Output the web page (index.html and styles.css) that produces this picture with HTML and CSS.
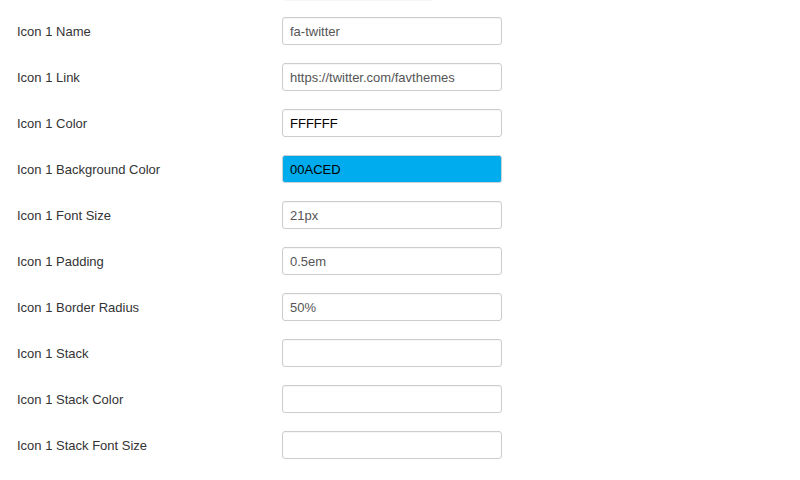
FILE: index.html
```html
<!DOCTYPE html>
<html>
<head>
<meta charset="utf-8">
<link rel="stylesheet" href="styles.css">
</head>
<body>
<div class="topedge"></div>
<form class="form">
  <div class="row"><label>Icon 1 Name</label><input class="field" type="text" value="fa-twitter"></div>
  <div class="row"><label>Icon 1 Link</label><input class="field" type="text" value="https://twitter.com/favthemes"></div>
  <div class="row"><label>Icon 1 Color</label><input class="field color" type="text" value="FFFFFF"></div>
  <div class="row"><label>Icon 1 Background Color</label><input class="field color blue" type="text" value="00ACED"></div>
  <div class="row"><label>Icon 1 Font Size</label><input class="field" type="text" value="21px"></div>
  <div class="row"><label>Icon 1 Padding</label><input class="field" type="text" value="0.5em"></div>
  <div class="row"><label>Icon 1 Border Radius</label><input class="field" type="text" value="50%"></div>
  <div class="row"><label>Icon 1 Stack</label><input class="field" type="text" value=""></div>
  <div class="row"><label>Icon 1 Stack Color</label><input class="field" type="text" value=""></div>
  <div class="row"><label>Icon 1 Stack Font Size</label><input class="field" type="text" value=""></div>
</form>
</body>
</html>
```
FILE: styles.css
```css
html, body {
  margin: 0;
  padding: 0;
  background: #fff;
  font-family: "Liberation Sans", Arial, sans-serif;
  font-size: 13px;
  color: #333;
}
.topedge {
  height: 1px;
  width: 148px;
  margin-left: 284px;
  background: #f6f6f6;
}
.form {
  padding: 16px 0 0 17px;
  display: flex;
  flex-direction: column;
  gap: 18px;
}
.row {
  display: flex;
  align-items: center;
  height: 28px;
}
.row label {
  width: 265px;
  flex: none;
  color: #333;
  padding-top: 1px;
}
.field {
  box-sizing: border-box;
  width: 220px;
  height: 28px;
  margin: 0;
  padding: 4px 7px;
  border: 1px solid #ccc;
  border-radius: 3px;
  background: #fff;
  font-family: "Liberation Sans", Arial, sans-serif;
  font-size: 13px;
  color: #555;
  box-shadow: inset 0 1px 1px rgba(0,0,0,0.04);
  outline: none;
}
.field.color {
  color: #000;
}
.field.blue {
  background: #00aced;
  border-color: #c8d4d8;
}
```
